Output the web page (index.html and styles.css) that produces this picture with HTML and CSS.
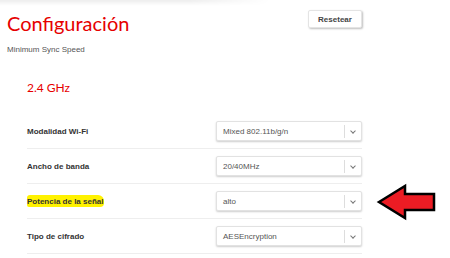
FILE: index.html
```html
<!DOCTYPE html>
<html lang="es">
<head>
    <meta charset="UTF-8">
    <meta name="viewport" content="width=device-width, initial-scale=1.0">
    <title>Configuración</title>
    <link rel="stylesheet" href="styles.css">
</head>
<body>
    <div class="topshade"></div>
    <div class="page">
        <!--cabecera-->
        <div class="header">
            <div>
                <h1 class="title">Configuración</h1>
                <p class="sub">Minimum Sync Speed</p>
            </div>
            <button class="reset">Resetear</button>
        </div>
        <!--2.4 GHz-->
        <div class="section">
            <h2 class="band">2.4 GHz</h2>
            <div class="row">
                <span class="label">Modalidad Wi-Fi</span>
                <div class="select"><span class="val">Mixed 802.11b/g/n</span><span class="caret"></span></div>
            </div>
            <div class="row">
                <span class="label">Ancho de banda</span>
                <div class="select"><span class="val">20/40MHz</span><span class="caret"></span></div>
            </div>
            <div class="row">
                <span class="label"><span class="mark">Potencia de la señal</span></span>
                <div class="select"><span class="val">alto</span><span class="caret"></span></div>
            </div>
            <div class="row">
                <span class="label">Tipo de cifrado</span>
                <div class="select"><span class="val">AESEncryption</span><span class="caret"></span></div>
            </div>
        </div>
    </div>
    <!--flecha-->
    <svg class="arrow" width="62" height="38" viewBox="0 0 62 38">
        <path d="M3 19 L29 3 L29 11 L58 11 L58 27 L29 27 L29 35 Z" fill="#ec1c24" stroke="#000" stroke-width="2.5" stroke-linejoin="miter"/>
    </svg>
</body>
</html>
```

FILE: styles.css
```css
*{
    margin: 0;
    padding: 0;
    box-sizing: border-box;
}
body{
    font-family: "Liberation Sans", Arial, sans-serif;
    background: #fff;
    position: relative;
    width: 450px;
    height: 258px;
    overflow: hidden;
}
.topshade{
    width: 270px;
    height: 6px;
    background: linear-gradient(to bottom, rgba(0,0,0,.07), rgba(0,0,0,0));
    -webkit-mask-image: linear-gradient(to right, #000 70%, transparent);
}
.page{
    width: 362px;
    padding-left: 7px;
}
.header{
    display: flex;
    justify-content: space-between;
    align-items: flex-start;
}
.title{
    font-family: Lato, "Open Sans", sans-serif;
    font-weight: 400;
    font-size: 20px;
    line-height: 26px;
    color: #e60000;
    margin-top: 4px;
}
.sub{
    font-size: 8px;
    color: #555;
    margin-top: 9px;
}
.reset{
    width: 54px;
    height: 18px;
    margin-top: 4px;
    border: 1px solid #e4e4e4;
    border-radius: 2px;
    background: #fff;
    box-shadow: 1px 1px 2px rgba(0,0,0,.25);
    font-family: "Liberation Sans", Arial, sans-serif;
    font-weight: bold;
    font-size: 8px;
    color: #444;
}
.section{
    padding-left: 20px;
}
.band{
    font-family: Lato, "Open Sans", sans-serif;
    font-weight: 400;
    font-size: 12px;
    color: #e60000;
    margin-top: 26px;
    margin-bottom: 18px;
    line-height: 16px;
}
.row{
    display: flex;
    justify-content: space-between;
    align-items: center;
    padding: 7px 0;
    border-bottom: 1px solid #eee;
}
.label{
    font-size: 8px;
    font-weight: bold;
    color: #333;
}
.mark{
    background: #fff200;
    border-radius: 3px 6px 4px 2px;
    padding: 2px 1px 1px 0;
}
.select{
    width: 146px;
    height: 20px;
    border: 1px solid #e2e2e2;
    border-radius: 2px;
    box-shadow: 0 1px 2px rgba(0,0,0,.2);
    display: flex;
    align-items: center;
    background: #fff;
}
.val{
    flex: 1;
    padding-left: 6px;
    font-size: 8px;
    color: #555;
}
.caret{
    width: 17px;
    height: 13px;
    border-left: 1px solid #ddd;
    position: relative;
}
.caret::after{
    content: "";
    position: absolute;
    left: 6px;
    top: 4px;
    width: 3px;
    height: 3px;
    border-right: 1px solid #777;
    border-bottom: 1px solid #777;
    transform: rotate(45deg);
}
.arrow{
    position: absolute;
    left: 376px;
    top: 183px;
}
```
